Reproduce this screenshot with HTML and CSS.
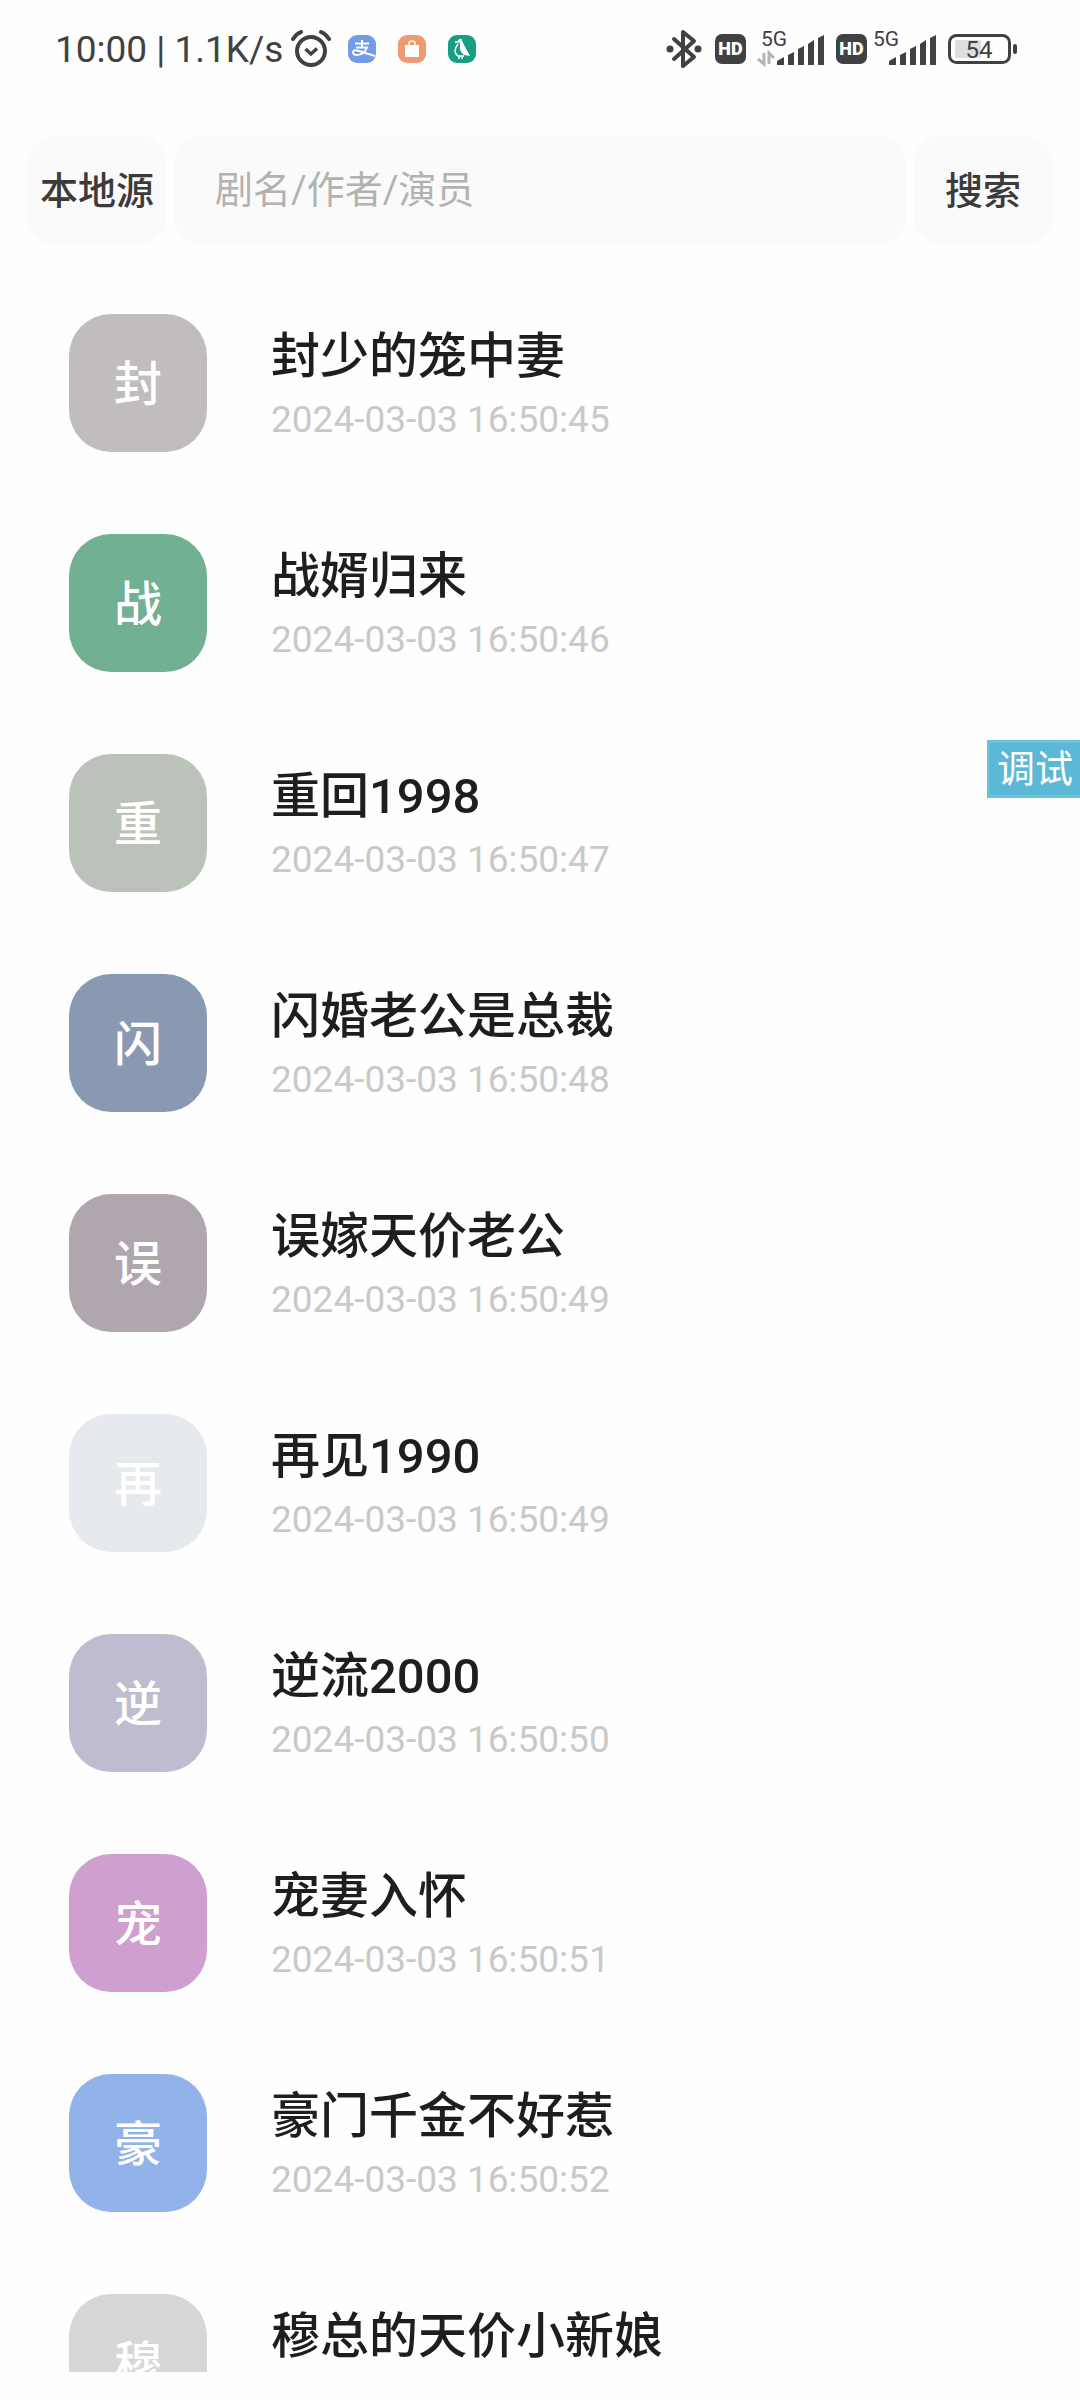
FILE: index.html
```html
<!DOCTYPE html>
<html lang="zh-CN">
  <head>
    <meta charset="UTF-8">
    <meta name="viewport" content="width=device-width, initial-scale=1">
    <title>本地源</title>
    <link rel="stylesheet" href="styles.css">
  </head>
  <body>
    <header class="status-bar">
      <div class="status-left">
        <span class="clock">10:00 | 1.1K/s</span>
        <svg class="alarm" width="40" height="38" viewBox="0 0 40 38">
          <circle cx="20" cy="21" r="14" fill="none" stroke="#414141" stroke-width="4"/>
          <path d="M2 9 Q5 4 10 2 M38 9 Q35 4 30 2" fill="none" stroke="#414141" stroke-width="4" stroke-linecap="round"/>
          <path d="M14.500 19 L20 24 L26 18.500" fill="none" stroke="#414141" stroke-width="3.500"/>
        </svg>
        <svg class="app" width="30" height="30" viewBox="0 0 30 30">
          <rect x="1" y="1" width="28" height="28" rx="9" fill="#739ce8"/>
          <path d="M8 9.500 H22 M15 6 V13 M9 13.500 H20 Q17 21 10 21 Q6 21 6 18 Q7 15 12 17 L28 22" fill="none" stroke="#fff" stroke-width="2"/>
        </svg>
        <svg class="app" width="30" height="30" viewBox="0 0 30 30">
          <rect x="1" y="1" width="28" height="28" rx="9" fill="#ef9a73"/>
          <path d="M8 11 H22 V23 H8 Z" fill="#fff"/>
          <path d="M12 13 V9 Q12 7 15 7 Q18 7 18 9 V13" fill="none" stroke="#fff" stroke-width="1.500"/>
        </svg>
        <svg class="app" width="30" height="30" viewBox="0 0 30 30">
          <rect x="1" y="1" width="28" height="28" rx="9" fill="#15a181"/>
          <path d="M12 6 Q15 5 16 9 L23 22 L17 21 Q12 17 13 11 Z" fill="#fff"/>
          <path d="M8 8 H11 Q12 5 15 6 M11 10 Q5 18 11 22 H17 M12 22 V25 M15 22 V25" fill="none" stroke="#fff" stroke-width="1.500"/>
        </svg>
      </div>
      <div class="status-right">
        <svg width="40" height="40" viewBox="0 0 40 40">
          <path d="M9 10 L29 28 L18 37 V3 L29 12 L9 30" fill="none" stroke="#414141" stroke-width="4" stroke-linejoin="round" stroke-linecap="round"/>
          <circle cx="5" cy="20" r="3.500" fill="#414141"/>
          <circle cx="33" cy="20" r="3.500" fill="#414141"/>
        </svg>
        <span class="hd">HD</span>
        <svg width="70" height="48" viewBox="0 -4 70 48">
          <text class="net" x="5" y="17">5G</text>
          <path d="M8 24 V35 L2 30 M13 35 V24 L18 29" fill="none" stroke="#b5b5b5" stroke-width="3"/>
          <path d="M21 36 V32 L28 28 V36 Z M32 36 V26 L38 23 V36 Z M42 36 V20 L48 17 V36 Z M52 36 V15 L58 11 V36 Z M62 36 V9 L68 6 V36 Z" fill="#414141"/>
        </svg>
        <span class="hd">HD</span>
        <svg class="sim2" width="70" height="48" viewBox="0 -4 70 48">
          <text class="net" x="5" y="17">5G</text>
          <path d="M21 36 V32 L28 28 V36 Z M32 36 V26 L38 23 V36 Z M42 36 V20 L48 17 V36 Z M52 36 V15 L58 11 V36 Z M62 36 V9 L68 6 V36 Z" fill="#414141"/>
        </svg>
        <svg class="battery" width="70" height="30" viewBox="0 0 70 30">
          <rect x="1.500" y="1.500" width="60" height="27" rx="7" fill="none" stroke="#414141" stroke-width="3"/>
          <rect x="7" y="6" width="26" height="18" rx="2" fill="#dedede"/>
          <rect x="65" y="10" width="4" height="10" rx="2" fill="#414141"/>
          <text class="level" x="31" y="24" text-anchor="middle">54</text>
        </svg>
      </div>
    </header>

    <form class="search">
      <button type="button" class="search-button">本地源</button>
      <input class="search-input" type="text" aria-label="搜索" placeholder="剧名/作者/演员">
      <button type="button" class="search-button">搜索</button>
    </form>

    <ul class="list">
      <li class="item">
        <span class="avatar feng">封</span>
        <div class="info"><p class="title">封少的笼中妻</p><p class="time">2024-03-03 16:50:45</p></div>
      </li>
      <li class="item">
        <span class="avatar zhan">战</span>
        <div class="info"><p class="title">战婿归来</p><p class="time">2024-03-03 16:50:46</p></div>
      </li>
      <li class="item">
        <span class="avatar chong">重</span>
        <div class="info"><p class="title">重回1998</p><p class="time">2024-03-03 16:50:47</p></div>
      </li>
      <li class="item">
        <span class="avatar shan">闪</span>
        <div class="info"><p class="title">闪婚老公是总裁</p><p class="time">2024-03-03 16:50:48</p></div>
      </li>
      <li class="item">
        <span class="avatar wu">误</span>
        <div class="info"><p class="title">误嫁天价老公</p><p class="time">2024-03-03 16:50:49</p></div>
      </li>
      <li class="item">
        <span class="avatar zai">再</span>
        <div class="info"><p class="title">再见1990</p><p class="time">2024-03-03 16:50:49</p></div>
      </li>
      <li class="item">
        <span class="avatar ni">逆</span>
        <div class="info"><p class="title">逆流2000</p><p class="time">2024-03-03 16:50:50</p></div>
      </li>
      <li class="item">
        <span class="avatar chongqi">宠</span>
        <div class="info"><p class="title">宠妻入怀</p><p class="time">2024-03-03 16:50:51</p></div>
      </li>
      <li class="item">
        <span class="avatar hao">豪</span>
        <div class="info"><p class="title">豪门千金不好惹</p><p class="time">2024-03-03 16:50:52</p></div>
      </li>
      <li class="item">
        <span class="avatar mu">穆</span>
        <div class="info"><p class="title">穆总的天价小新娘</p></div>
      </li>
    </ul>

    <button type="button" class="debug">调试</button>
  </body>
</html>
```
FILE: styles.css
```css
* {
  box-sizing: border-box;
}
body {
  display: flex;
  flex-direction: column;
  height: 100vh;
  margin: 0;
  padding-bottom: 28px;
  background: #fefefe;
  color: #1e1e1e;
  font-family: Roboto, "Noto Sans CJK SC", sans-serif;
}
button, input {
  border: 0;
  font-family: inherit;
}

/* status bar */
.status-bar {
  display: flex;
  flex: none;
  align-items: center;
  justify-content: space-between;
  height: 98px;
  padding: 0 62px 0 55px;
  color: #414141;
}
.status-left, .status-right {
  display: flex;
  align-items: center;
}
.clock {
  font-size: 37px;
  white-space: pre;
}
.alarm {
  margin-left: 8px;
}
.app {
  margin-left: 20px;
}
.alarm + .app {
  margin-left: 16px;
}
.status-right {
  gap: 10px;
}
.hd {
  width: 31px;
  border-radius: 7px;
  background: #414141;
  color: #fff;
  font-size: 18px;
  font-weight: 900;
  line-height: 30px;
  text-align: center;
}
.sim2 {
  margin-left: -9px;
}
.net {
  font-size: 21px;
  fill: #414141;
}
.level {
  font-size: 24px;
  fill: #414141;
}

/* search row */
.search {
  display: flex;
  flex: none;
  gap: 8px;
  padding: 37px 28px 28px;
}
.search-button {
  flex: none;
  width: 138px;
  height: 110px;
  padding: 0 0 6px;
  border-radius: 28px;
  background: #fafafa;
  color: #3c3a3a;
  font-size: 38px;
  font-weight: 500;
}
.search-input {
  flex: 1;
  min-width: 0;
  padding: 0 41px;
  border-radius: 28px;
  background: #fafafa;
  font-size: 38px;
}
.search-input::placeholder {
  color: #b2b2b2;
}

/* list */
.list {
  flex: 1;
  min-height: 0;
  margin: 0;
  padding: 0;
  overflow: hidden;
  list-style: none;
}
.item {
  display: flex;
  gap: 64px;
  height: 220px;
  padding: 41px 69px;
}
.avatar {
  flex: none;
  width: 138px;
  height: 138px;
  border-radius: 42px;
  color: #fff;
  font-size: 48px;
  font-weight: 500;
  line-height: 142px;
  text-align: center;
}
.info {
  padding-top: 10px;
}
.title, .time {
  margin: 0;
  white-space: nowrap;
}
.title {
  font-size: 49px;
  font-weight: 500;
  line-height: 66px;
}
.time {
  color: #c9c9c9;
  font-size: 37px;
  line-height: 60px;
}
.feng { background: #c1bdbe; }
.zhan { background: #71b092; }
.chong { background: #bac2ba; }
.shan { background: #8999b2; }
.wu { background: #b0a6ae; }
.zai { background: #e6e9ee; }
.ni { background: #bebdd0; }
.chongqi { background: #cf9fcf; }
.hao { background: #92b3ea; }
.mu { background: #d8d6d7; }

.debug {
  position: fixed;
  top: 740px;
  right: 0;
  height: 58px;
  padding: 0 7px;
  border: 3px solid #6bc0da;
  border-right: 0;
  background: #5bb8d6;
  color: #fff;
  font-size: 38px;
  line-height: 52px;
}
```
